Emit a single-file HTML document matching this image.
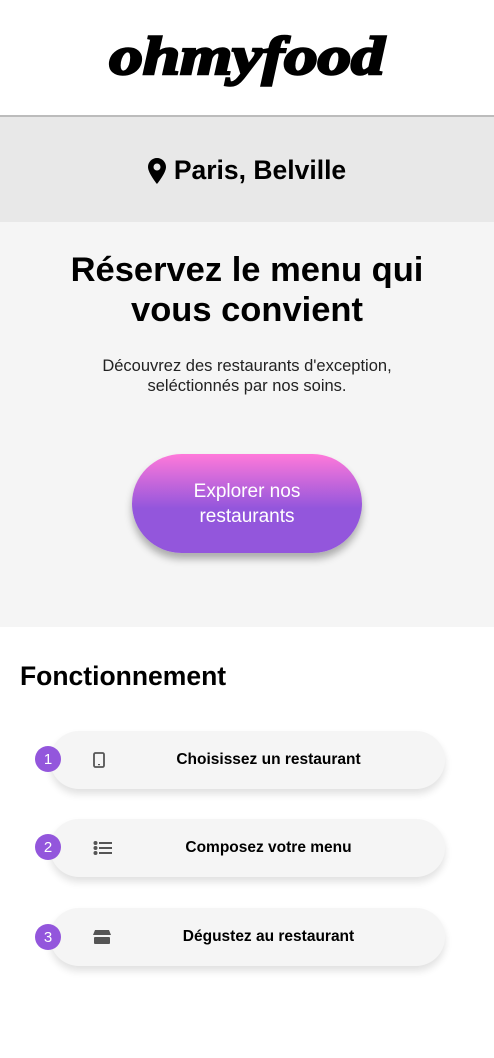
<!DOCTYPE html>
<html><head><meta charset="utf-8"><style>
*{margin:0;padding:0;box-sizing:border-box}
body{width:494px;height:1058px;background:#fff;font-family:"Liberation Sans",sans-serif;color:#000;overflow:hidden}
header{height:117px;display:flex;align-items:center;justify-content:center;border-bottom:2px solid #bcbcbc}
.logo{font-family:"Liberation Serif",serif;font-weight:900;font-style:italic;font-size:54px;letter-spacing:0px;transform:scaleX(1.24);margin-top:-4px;-webkit-text-stroke:2.5px #000}
.loc{height:105px;background:#e8e8e8;display:flex;align-items:center;justify-content:center;font-size:26.5px;font-weight:bold;padding-top:2px}
.loc svg{margin-right:8px}
.hero{height:405px;background:#f5f5f5;text-align:center;padding-top:28px}
.hero h1{font-size:34.5px;font-weight:bold;line-height:40px}
.hero p{font-size:16.5px;line-height:20px;margin-top:26px;color:#222}
.btn{width:230px;height:99px;margin:58px auto 0;border-radius:50px;background:linear-gradient(#ff79da,#9356dc 55%);color:#fff;font-size:19px;line-height:25px;display:flex;align-items:center;justify-content:center;box-shadow:0 6px 8px rgba(0,0,0,.3)}
h2{font-size:26.5px;font-weight:bold;margin:34px 0 0 20px}
.card{position:absolute;left:50px;width:395px;height:58px;border-radius:30px;background:#f5f5f5;box-shadow:0 5px 8px rgba(0,0,0,.12);display:flex;align-items:center;font-weight:bold;font-size:15.5px}
.card span{position:absolute;left:0;right:0;text-align:center;padding-left:42px}
.card svg{position:absolute;left:43px}
.b{position:absolute;left:35px;width:26px;height:26px;border-radius:50%;background:#9356dc;color:#fff;font-size:15px;display:flex;align-items:center;justify-content:center;z-index:2}
</style></head><body>
<header><div class="logo">ohmyfood</div></header>
<div class="loc"><svg width="18" height="26" viewBox="0 0 18 26"><path d="M9 0C4 0 0 4 0 9c0 6 9 17 9 17s9-11 9-17c0-5-4-9-9-9zm0 12.5a3.5 3.5 0 1 1 0-7 3.5 3.5 0 0 1 0 7z" fill="#000"/></svg>Paris, Belville</div>
<div class="hero"><h1>Réservez le menu qui<br>vous convient</h1><p>Découvrez des restaurants d'exception,<br>seléctionnés par nos soins.</p><div class="btn">Explorer nos<br>restaurants</div></div>
<h2>Fonctionnement</h2>
<div class="b" style="top:746px">1</div>
<div class="card" style="top:731px"><svg width="12" height="16" viewBox="0 0 12 16"><rect x="1" y="1" width="10" height="14" rx="1.5" fill="none" stroke="#555" stroke-width="1.8"/><rect x="5" y="12" width="2" height="1.2" fill="#555"/></svg><span>Choisissez un restaurant</span></div>
<div class="b" style="top:834px">2</div>
<div class="card" style="top:819px"><svg width="20" height="16" viewBox="0 0 20 16"><circle cx="2.5" cy="3" r="2" fill="#555"/><circle cx="2.5" cy="8" r="2" fill="#555"/><circle cx="2.5" cy="13" r="2" fill="#555"/><rect x="6" y="2" width="13" height="2" fill="#555"/><rect x="6" y="7" width="13" height="2" fill="#555"/><rect x="6" y="12" width="13" height="2" fill="#555"/></svg><span>Composez votre menu</span></div>
<div class="b" style="top:924px">3</div>
<div class="card" style="top:908px"><svg width="18" height="16" viewBox="0 0 18 16"><path d="M2 1h14l2 5H0z" fill="#555"/><rect x="1" y="8" width="16" height="7" rx="1" fill="#555"/></svg><span>Dégustez au restaurant</span></div>
</body></html>
